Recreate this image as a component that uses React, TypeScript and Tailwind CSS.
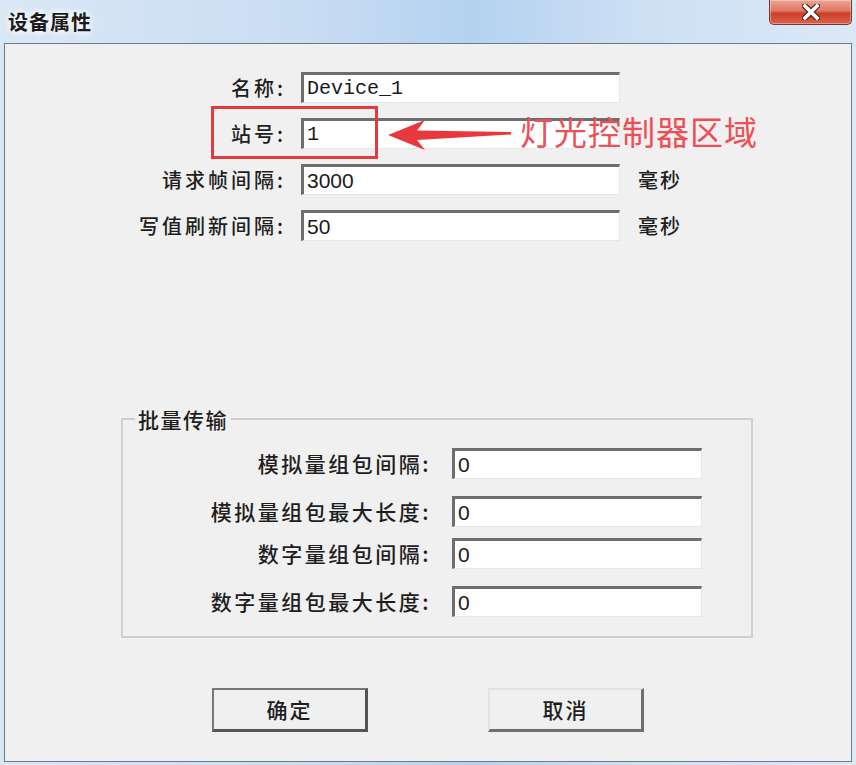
import React from "react";

const cjk = "font-['Noto_Sans_CJK_SC',sans-serif]";

function Field({ value, mono, w }: { value: string; mono?: boolean; w: string }) {
  return (
    <div
      className={`${w} h-[31px] bg-white border-t-[3px] border-l-[3px] border-t-[#6e6e6e] border-l-[#6e6e6e] border-r border-b border-r-[#e6e6e6] border-b-[#e6e6e6] flex items-center pl-[3px] text-[#1a1a1a] ${
        mono
          ? "font-['Liberation_Mono',monospace] text-[20px]"
          : "font-['Liberation_Sans',sans-serif] text-[21px]"
      }`}
    >
      {value}
    </div>
  );
}

function TopLabel({ text }: { text: string }) {
  return (
    <div
      className={`${cjk} h-[31px] flex items-center justify-end text-[20px] font-medium tracking-[3px] text-[#1e1e1e] pr-[0px]`}
    >
      {text}
    </div>
  );
}

function GroupRow({ label, mt }: { label: string; mt: string }) {
  return (
    <div className={`flex items-center ${mt}`}>
      <div
        className={`${cjk} w-[310px] flex justify-end text-[21px] font-medium tracking-[2.5px] text-[#1e1e1e] pr-[2px]`}
      >
        {label}
      </div>
      <div className="ml-[19px]">
        <Field value="0" w="w-[250px]" />
      </div>
    </div>
  );
}

export default function App() {
  return (
    <div className="w-[856px] h-[765px] flex flex-col overflow-hidden bg-[linear-gradient(90deg,#dae7f5,#c9ddf3_35%,#b4d2f0_55%,#cde0f4_75%,#dbe8f6)]">
      {/* title bar */}
      <div className="h-[43px] flex justify-between items-start pl-[8px] pr-[4px]">
        <div
          className={`${cjk} mt-[7px] text-[20px] font-semibold tracking-[1px] text-[#1b1b1b] [text-shadow:0_0_6px_#ffffff,0_0_10px_#ffffff]`}
        >
          设备属性
        </div>
        <div className="w-[83px] h-[25px] rounded-b-[5px] border border-t-0 border-[#6d3a33] bg-[linear-gradient(180deg,#eca493_0%,#df7763_45%,#cb3f29_55%,#dc604a_100%)] flex items-center justify-center shadow-[inset_0_0_0_1px_rgba(255,255,255,0.35)]">
          <svg width="18" height="16" viewBox="0 0 18 16">
            <path d="M3 2 L15 14 M15 2 L3 14" stroke="#4a2420" strokeWidth="6" strokeLinecap="square" />
            <path d="M3 2 L15 14 M15 2 L3 14" stroke="#ffffff" strokeWidth="3.6" strokeLinecap="square" />
          </svg>
        </div>
      </div>

      {/* client area */}
      <div className="mx-[4px] h-[719px] border border-[#6c7b8b] bg-[#f0f0f0] relative flex flex-col">
        {/* top form */}
        <div className="mt-[28px] grid grid-cols-[281px_319px_auto] gap-x-[15px] gap-y-[15px]">
          <TopLabel text="名称:" />
          <Field value="Device_1" mono w="w-[319px]" />
          <div />
          <TopLabel text="站号:" />
          <Field value="1" mono w="w-[319px]" />
          <div />
          <TopLabel text="请求帧间隔:" />
          <Field value="3000" w="w-[319px]" />
          <div className={`${cjk} h-[31px] flex items-center pl-[3px] text-[20px] font-medium tracking-[2px] text-[#1e1e1e]`}>
            毫秒
          </div>
          <TopLabel text="写值刷新间隔:" />
          <Field value="50" w="w-[319px]" />
          <div className={`${cjk} h-[31px] flex items-center pl-[3px] text-[20px] font-medium tracking-[2px] text-[#1e1e1e]`}>
            毫秒
          </div>
        </div>

        {/* group box */}
        <div className="mt-[177px] ml-[116px] w-[632px] h-[220px] border-2 border-[#cfcfcf] relative flex flex-col">
          <span
            className={`${cjk} absolute left-[12px] -top-[16px] px-[3px] bg-[#f0f0f0] text-[21px] font-medium tracking-[1.5px] text-[#1e1e1e] leading-[30px]`}
          >
            批量传输
          </span>
          <GroupRow label="模拟量组包间隔:" mt="mt-[28px]" />
          <GroupRow label="模拟量组包最大长度:" mt="mt-[16px]" />
          <GroupRow label="数字量组包间隔:" mt="mt-[11px]" />
          <GroupRow label="数字量组包最大长度:" mt="mt-[16px]" />
        </div>

        {/* buttons */}
        <div className="mt-[50px] ml-[207px] flex gap-[120px]">
          <button
            className={`${cjk} w-[156px] h-[44px] bg-[#f0f0f0] border-[2px] border-t-[#777777] border-l-[#777777] border-r-[3px] border-b-[3px] border-r-[#555555] border-b-[#555555] text-[21px] font-medium tracking-[2px] text-[#1e1e1e] flex items-center justify-center`}
          >
            确定
          </button>
          <button
            className={`${cjk} w-[156px] h-[44px] bg-[#f0f0f0] border-t-[2px] border-l-[2px] border-t-[#e2e2e2] border-l-[#e2e2e2] border-r-[3px] border-b-[3px] border-r-[#707070] border-b-[#707070] text-[21px] font-medium tracking-[2px] text-[#1e1e1e] flex items-center justify-center`}
          >
            取消
          </button>
        </div>

        {/* annotation overlays */}
        <div className="absolute left-[206px] top-[62px] w-[167px] h-[53px] border-[3px] border-[#e33a3d]" />
        <svg
          className="absolute left-[380px] top-[75px]"
          width="128"
          height="32"
          viewBox="0 0 128 32"
        >
          <path
            d="M3 16 L40 1 L32 11.5 L126 13 L126 15.5 L32 21 L40 31 Z"
            fill="#e8383b"
          />
        </svg>
        <div
          className={`${cjk} absolute left-[515px] top-[68px] text-[33px] leading-[38px] text-[#ee4f57] tracking-[1px]`}
        >
          灯光控制器区域
        </div>
      </div>
    </div>
  );
}
